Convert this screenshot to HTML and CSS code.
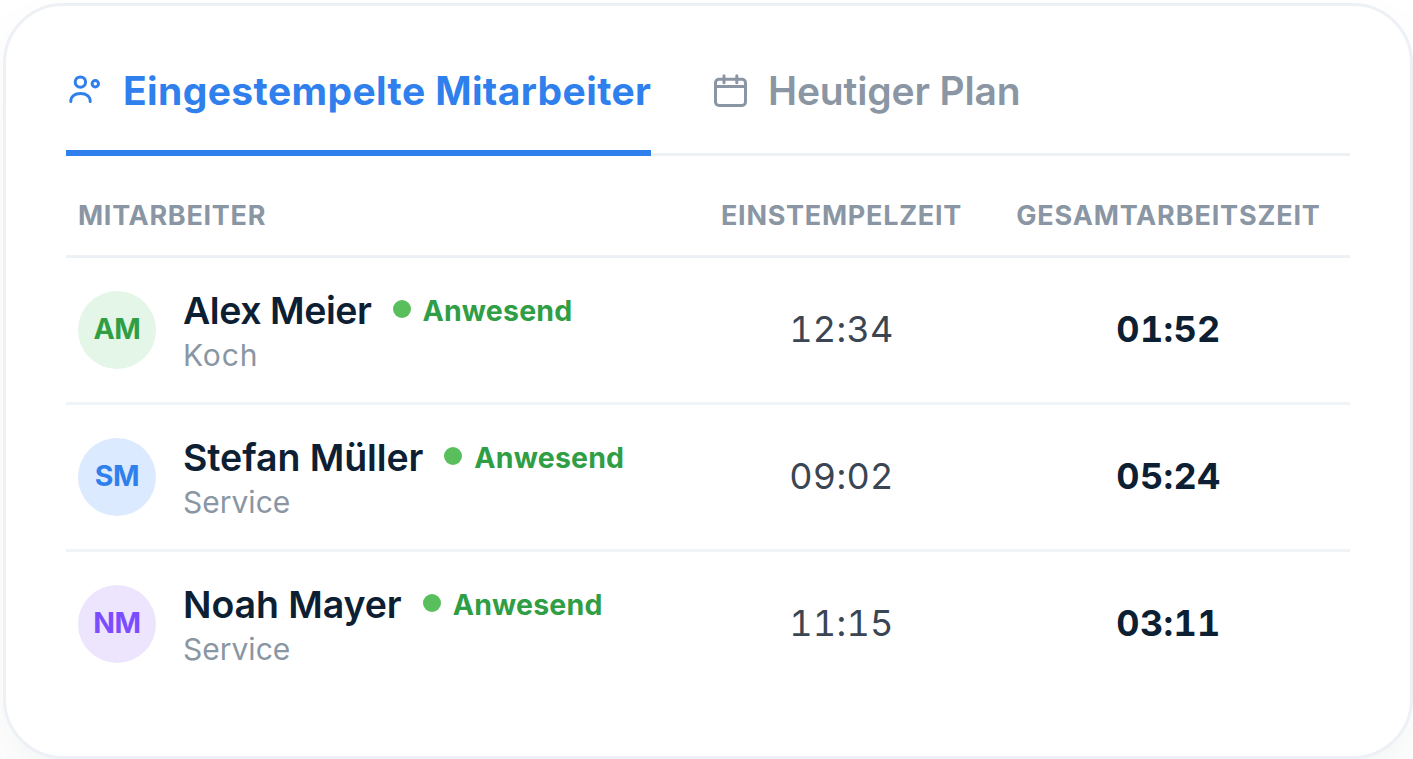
FILE: index.html
```html
<!DOCTYPE html>
<html lang="de">
<head>
    <meta charset="UTF-8">
    <meta name="viewport" content="width=device-width, initial-scale=1.0">
    <title>Eingestempelte Mitarbeiter</title>
    <link rel="stylesheet" href="styles.css">
</head>
<body>
    <div class="card">
        <nav class="tabs">
            <button class="tab active">
                <svg class="icon" viewBox="0 0 36 36">
                    <circle cx="14.4" cy="10.1" r="5.2"/>
                    <path d="M4.8 29.5c0-5 3.7-8 9.7-8s9.7 3 9.7 8"/>
                    <circle cx="29.3" cy="11.8" r="3.2"/>
                </svg>
                <span class="tab-label">Eingestempelte Mitarbeiter</span>
            </button>
            <button class="tab">
                <svg class="icon" viewBox="0 0 36 36">
                    <rect x="4.5" y="7.2" width="30" height="26.3" rx="3.5"/>
                    <path d="M4.5 14.4h30M13 3.8v7M25.8 3.8v7"/>
                </svg>
                <span class="tab-label">Heutiger Plan</span>
            </button>
        </nav>

        <table class="staff">
            <thead>
                <tr>
                    <th class="col-name">Mitarbeiter</th>
                    <th class="col-start">Einstempelzeit</th>
                    <th class="col-total">Gesamtarbeitszeit</th>
                </tr>
            </thead>
            <tbody>
                <tr>
                    <td>
                        <div class="person">
                            <div class="avatar green">AM</div>
                            <div class="info">
                                <div class="name-row"><span class="name tight">Alex Meier</span><span class="dot"></span><span class="status">Anwesend</span></div>
                                <div class="role wide">Koch</div>
                            </div>
                        </div>
                    </td>
                    <td class="start">12:34</td>
                    <td class="total">01:52</td>
                </tr>
                <tr>
                    <td>
                        <div class="person">
                            <div class="avatar blue">SM</div>
                            <div class="info">
                                <div class="name-row"><span class="name">Stefan Müller</span><span class="dot"></span><span class="status">Anwesend</span></div>
                                <div class="role">Service</div>
                            </div>
                        </div>
                    </td>
                    <td class="start">09:02</td>
                    <td class="total">05:24</td>
                </tr>
                <tr>
                    <td>
                        <div class="person">
                            <div class="avatar purple">NM</div>
                            <div class="info">
                                <div class="name-row"><span class="name">Noah Mayer</span><span class="dot"></span><span class="status">Anwesend</span></div>
                                <div class="role">Service</div>
                            </div>
                        </div>
                    </td>
                    <td class="start">11:15</td>
                    <td class="total">03:11</td>
                </tr>
            </tbody>
        </table>
    </div>
</body>
</html>
```
FILE: styles.css
```css
* {
    box-sizing: border-box;
}

html {
    overflow: hidden;
    background: #fff;
}

/* compact widget, shown at 3x */
body {
    width: 471px;
    height: 253px;
    margin: 0;
    padding: 1px 0 0 1px;
    transform: scale(3);
    transform-origin: 0 0;
    font-family: Inter, sans-serif;
    color: #0d2033;
}

.card {
    width: 470px;
    height: 252px;
    padding: 0 20px;
    background: #fff;
    border: 1px solid #edf1f5;
    border-radius: 20px;
    box-shadow: 0 10px 20px rgba(13, 50, 33, 0.05);
}

.tabs {
    display: flex;
    gap: 20px;
    height: 50px;
    border-bottom: 1px solid #edf1f5;
}

.tab {
    display: flex;
    align-items: center;
    height: 50px;
    padding: 8px 0 0;
    border: none;
    border-bottom: 2px solid transparent;
    background: none;
    font-family: inherit;
    font-size: 13px;
    font-weight: 600;
    letter-spacing: -0.05px;
    color: #8a96a3;
}

.tab.active {
    width: 195px;
    font-weight: 700;
    letter-spacing: 0.13px;
    white-space: nowrap;
    color: #2f80ed;
    border-bottom-color: #2f80ed;
}

.icon {
    flex: none;
    width: 12px;
    height: 12px;
    margin-right: 7px;
    fill: none;
    stroke: currentColor;
    stroke-width: 3;
    stroke-linecap: round;
    stroke-linejoin: round;
}

.staff {
    width: 100%;
    table-layout: fixed;
    border-collapse: separate;
    border-spacing: 0;
}

.staff th {
    height: 34px;
    padding: 6px 0 0;
    font-size: 9px;
    font-weight: 700;
    letter-spacing: 0.24px;
    text-transform: uppercase;
    color: #8a96a3;
    border-bottom: 1px solid #edf1f5;
}

.staff .col-name {
    width: 210px;
    padding-left: 4px;
    text-align: left;
}

.staff .col-start {
    width: 97px;
}

.staff .col-total {
    width: 121px;
    letter-spacing: 0.28px;
}

.staff td {
    height: 49px;
    padding: 0;
    text-align: center;
    border-bottom: 1px solid #f1f4f6;
}

.staff tbody tr:last-child td {
    border-bottom-color: transparent;
}

.person {
    display: flex;
    align-items: center;
    gap: 9px;
    padding-left: 4px;
    text-align: left;
}

.avatar {
    width: 26px;
    height: 26px;
    border-radius: 50%;
    font-size: 9.5px;
    font-weight: 700;
    line-height: 26px;
    letter-spacing: -0.1px;
    text-align: center;
}

.green {
    background: #e4f6e7;
    color: #2f9e44;
}

.blue {
    background: #dbeafe;
    color: #2f80ed;
}

.purple {
    background: #ece5fd;
    color: #7c4dff;
}

.name-row {
    display: flex;
    align-items: center;
    height: 16px;
}

.name {
    font-size: 12.5px;
    font-weight: 600;
    letter-spacing: -0.03px;
}

.name.tight {
    letter-spacing: -0.15px;
}

.dot {
    width: 6px;
    height: 6px;
    margin: 0 4px 1px 7px;
    border-radius: 50%;
    background: #59bf5c;
}

.status {
    font-size: 9.5px;
    font-weight: 700;
    letter-spacing: 0.06px;
    color: #2f9e44;
}

.role {
    font-size: 10px;
    line-height: 14px;
    color: #8a96a3;
}

.role.wide {
    letter-spacing: 0.3px;
}

.staff .start,
.staff .total {
    padding-bottom: 2px;
    font-size: 12px;
    font-variant-numeric: tabular-nums;
    letter-spacing: 0.1px;
}

.start {
    color: #3a4653;
}

.total {
    font-weight: 700;
}
```
